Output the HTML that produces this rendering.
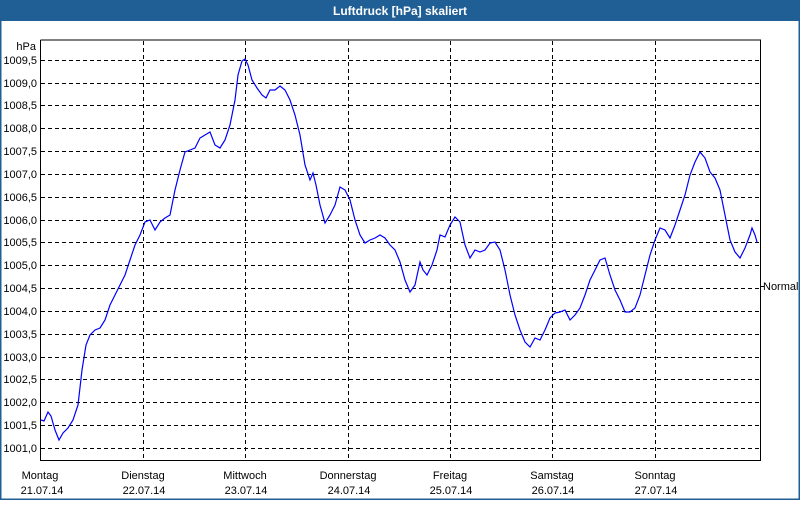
<!DOCTYPE html>
<html><head><meta charset="utf-8"><style>
body{margin:0;width:800px;height:500px;overflow:hidden;background:#fff;font-family:"Liberation Sans",sans-serif}
</style></head><body>
<svg width="800" height="500" xmlns="http://www.w3.org/2000/svg" font-family="Liberation Sans, sans-serif" font-size="11">
<rect x="0" y="0" width="800" height="500" fill="#fff"/>
<rect x="0" y="0" width="800" height="21" fill="#1f5f96"/>
<rect x="0" y="0" width="1.5" height="500" fill="#1f5f96"/>
<rect x="798.5" y="0" width="1.5" height="500" fill="#1f5f96"/>
<rect x="0" y="498.5" width="800" height="1.5" fill="#1f5f96"/>
<text x="400" y="15" fill="#fff" font-weight="bold" font-size="12" text-anchor="middle">Luftdruck [hPa] skaliert</text>
<g stroke="#000" stroke-width="1" stroke-dasharray="4,3" fill="none">
<path d="M41 60.5H760M41 83.5H760M41 105.5H760M41 128.5H760M41 151.5H760M41 174.5H760M41 197.5H760M41 220.5H760M41 242.5H760M41 265.5H760M41 288.5H760M41 311.5H760M41 334.5H760M41 357.5H760M41 379.5H760M41 402.5H760M41 425.5H760M41 448.5H760"/>
<path d="M143.5 41V460M245.5 41V460M348.5 41V460M450.5 41V460M552.5 41V460M655.5 41V460"/>
</g>
<path d="M40.5 40V460.5H760.5V40H40.5" fill="none" stroke="#000"/>
<path d="M760 286.5H764" stroke="#000"/>
<text x="763" y="290" fill="#000">Normal</text>
<g fill="#000" text-anchor="end">
<text x="36" y="50">hPa</text>
<text x="37" y="64">1009,5</text><text x="37" y="87">1009,0</text><text x="37" y="109">1008,5</text><text x="37" y="132">1008,0</text><text x="37" y="155">1007,5</text><text x="37" y="178">1007,0</text><text x="37" y="201">1006,5</text><text x="37" y="224">1006,0</text><text x="37" y="246">1005,5</text><text x="37" y="269">1005,0</text><text x="37" y="292">1004,5</text><text x="37" y="315">1004,0</text><text x="37" y="338">1003,5</text><text x="37" y="361">1003,0</text><text x="37" y="383">1002,5</text><text x="37" y="406">1002,0</text><text x="37" y="429">1001,5</text><text x="37" y="452">1001,0</text>
</g>
<g fill="#000" text-anchor="middle">
<text x="40" y="479">Montag</text><text x="42" y="494">21.07.14</text>
<text x="143" y="479">Dienstag</text><text x="144" y="494">22.07.14</text>
<text x="245" y="479">Mittwoch</text><text x="246" y="494">23.07.14</text>
<text x="348" y="479">Donnerstag</text><text x="349" y="494">24.07.14</text>
<text x="450" y="479">Freitag</text><text x="451" y="494">25.07.14</text>
<text x="552" y="479">Samstag</text><text x="553" y="494">26.07.14</text>
<text x="655" y="479">Sonntag</text><text x="656" y="494">27.07.14</text>
</g>
<polyline fill="none" stroke="#0000ff" stroke-width="1.2" points="41,420 44,421 48,412 51,416 55,430 59,440 63,433 68,428 73,420 78,405 82,370 86,345 90,335 95,330 100,328 105,320 110,305 115,295 120,285 125,275 130,260 135,245 140,235 145,222 150,220 155,230 160,222 165,218 170,215 175,190 180,170 185,152 190,150 195,148 200,138 205,135 210,132 215,145 220,148 225,140 230,125 235,100 238,75 242,61 245,59 248,65 252,80 257,88 262,95 266,98 270,90 275,90 280,86 285,90 290,100 295,115 300,135 305,165 310,180 313,173 316,185 320,205 325,223 330,215 335,205 340,187 345,190 350,200 355,220 360,235 365,243 370,240 375,238 380,235 385,238 390,245 395,250 400,262 405,280 410,292 415,285 420,262 423,270 427,275 432,265 437,250 440,235 445,237 450,225 455,217 460,222 465,245 470,258 475,250 480,252 485,250 490,243 495,242 500,250 505,270 510,295 515,315 520,330 525,342 530,347 535,338 540,340 545,330 550,318 555,313 560,312 565,310 570,320 575,315 580,308 585,295 590,280 595,270 600,260 605,258 610,275 615,290 620,300 625,312 630,312 635,308 640,295 645,275 650,255 655,240 660,228 665,230 670,238 675,225 680,210 685,195 690,175 695,162 700,152 705,158 710,172 715,178 720,190 725,215 730,240 735,252 740,258 745,248 750,235 752,228 755,235 757,242"/>
</svg>
</body></html>
